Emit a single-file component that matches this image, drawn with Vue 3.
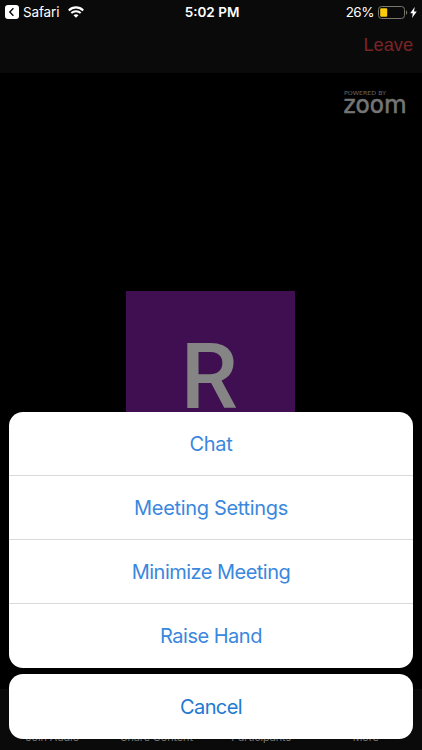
<script setup>
const actions = [
  { label: 'Chat', name: 'chat' },
  { label: 'Meeting Settings', name: 'settings' },
  { label: 'Minimize Meeting', name: 'minimize' },
  { label: 'Raise Hand', name: 'raise' },
]
const tabs = ['Join Audio', 'Share Content', 'Participants', 'More']
</script>

<template>
  <div class="screen">
    <header class="top">
      <div class="status">
        <div class="side">
          <svg class="back" width="14" height="14" viewBox="0 0 14 14">
            <rect width="14" height="14" rx="3" fill="#fff" />
            <path d="M8.4 3.2 4.8 7l3.6 3.8" fill="none" stroke="#0a0a0a" stroke-width="1.4" />
          </svg>
          <span class="app">Safari</span>
          <svg class="wifi" width="16" height="12" viewBox="0 0 16 12">
            <path d="M.8 4.4C4.9.4 11.1.4 15.2 4.4" fill="none" stroke="#fff" stroke-width="2.1" />
            <path d="M3.3 7.1C6 4.6 10 4.6 12.7 7.1" fill="none" stroke="#fff" stroke-width="2" />
            <path d="M5.5 9.2C6.9 7.8 9.1 7.8 10.5 9.2L8 11.7Z" fill="#fff" />
          </svg>
        </div>
        <span class="time">5:02 PM</span>
        <div class="side right">
          <span class="pct">26%</span>
          <svg class="battery" width="30" height="13" viewBox="0 0 30 13">
            <rect x=".5" y=".5" width="26" height="12" rx="3" fill="none" stroke="#77776e" />
            <rect x="2.2" y="2.2" width="7" height="8.6" rx="1" fill="#fccb0a" />
            <path d="M28 4.2c1.7.8 1.7 3.8 0 4.6Z" fill="#77776e" />
          </svg>
          <svg class="bolt" width="7" height="11" viewBox="0 0 7 11">
            <path d="M4.7 0 .2 6.2h2.6L2 11l4.8-6.4H4Z" fill="#fff" />
          </svg>
        </div>
      </div>
      <div class="nav"><span class="leave">Leave</span></div>
    </header>

    <main class="stage">
      <div class="brand">
        <svg width="66" height="34" viewBox="0 0 66 34">
          <text class="powered" x="2" y="6.2" textLength="42" lengthAdjust="spacingAndGlyphs">POWERED BY</text>
          <text class="zoom" x="1.4" y="23.5" textLength="63.2" lengthAdjust="spacingAndGlyphs">zoom</text>
        </svg>
      </div>
      <div class="avatar"><span class="initial">R</span></div>
    </main>

    <footer class="tabs">
      <span v-for="tab in tabs" :key="tab" class="tab">{{ tab }}</span>
    </footer>

    <div class="sheet">
      <div class="group">
        <div v-for="a in actions" :key="a.name" class="action"><span :class="a.name">{{ a.label }}</span></div>
      </div>
      <div class="cancel"><span>Cancel</span></div>
    </div>
  </div>
</template>

<style>
body { background: #000; }
</style>

<style scoped>
.screen {
  position: relative;
  display: flex;
  flex-direction: column;
  width: 422px;
  height: 750px;
  overflow: hidden;
  background: #000;
  font-family: Inter, "Liberation Sans", sans-serif;
}
.top { height: 73px; background: #0a0a0a; color: #fff; }
.status {
  display: grid;
  grid-template-columns: 1fr auto 1fr;
  align-items: center;
  height: 24px;
  padding: 0 5px;
  font-size: 13.5px;
}
.side { display: flex; align-items: center; }
.right { justify-content: flex-end; }
.app { margin-left: 4px; letter-spacing: -0.15px; }
.wifi { margin-left: 9px; }
.time { padding-left: 2px; font-weight: 600; }
.pct { letter-spacing: -0.5px; }
.battery { margin-left: 4px; }
.bolt { margin-left: 2px; }
.nav { display: flex; justify-content: flex-end; padding: 9px 9px 0 0; }
.leave {
  font-family: "Liberation Sans", sans-serif;
  font-size: 18.2px;
  line-height: 25px;
  color: #7c2425;
}
.stage {
  display: flex;
  flex-direction: column;
  align-items: center;
  height: 616px;
}
.brand { align-self: flex-end; height: 34px; margin: 16px 14px 0 0; }
.brand svg { display: block; overflow: visible; }
.powered { font-family: "DejaVu Sans", sans-serif; font-size: 5.5px; fill: #6c6c6c; }
.zoom {
  font-family: "DejaVu Sans", sans-serif;
  font-size: 24px;
  fill: #757575;
  stroke: #757575;
  stroke-width: 0.6px;
}
.avatar {
  display: flex;
  justify-content: center;
  width: 169px;
  height: 169px;
  margin: 168px 1px 0 0;
  background: #400f52;
}
.initial {
  margin: 33px 2px 0 0;
  font-family: Roboto, sans-serif;
  font-size: 91px;
  font-weight: 500;
  line-height: 106px;
  color: #858585;
}
.tabs {
  display: grid;
  grid-template-columns: repeat(4, 1fr);
  height: 61px;
  padding: 0 4px 0 0;
  background: #0a0a0a;
}
.tab {
  padding-top: 42px;
  text-align: center;
  font-size: 10.8px;
  line-height: 14px;
  letter-spacing: -0.05px;
  color: #777;
}
.sheet {
  position: absolute;
  left: 9px;
  right: 9px;
  bottom: 11px;
  display: flex;
  flex-direction: column;
  gap: 6px;
  font-size: 20px;
}
.group, .cancel { overflow: hidden; border-radius: 14px; background: #fff; }
.action {
  display: flex;
  align-items: center;
  justify-content: center;
  height: 64px;
  box-sizing: border-box;
  border-bottom: 1px solid #d9d9db;
  color: #3a87de;
}
.action:last-child { border-bottom: 0; }
.chat { letter-spacing: -0.35px; }
.settings { letter-spacing: -0.33px; }
.minimize { letter-spacing: -0.52px; }
.raise { letter-spacing: -0.5px; }
.cancel {
  display: flex;
  align-items: center;
  justify-content: center;
  height: 65px;
  letter-spacing: -0.6px;
  color: #2079d2;
}
</style>
